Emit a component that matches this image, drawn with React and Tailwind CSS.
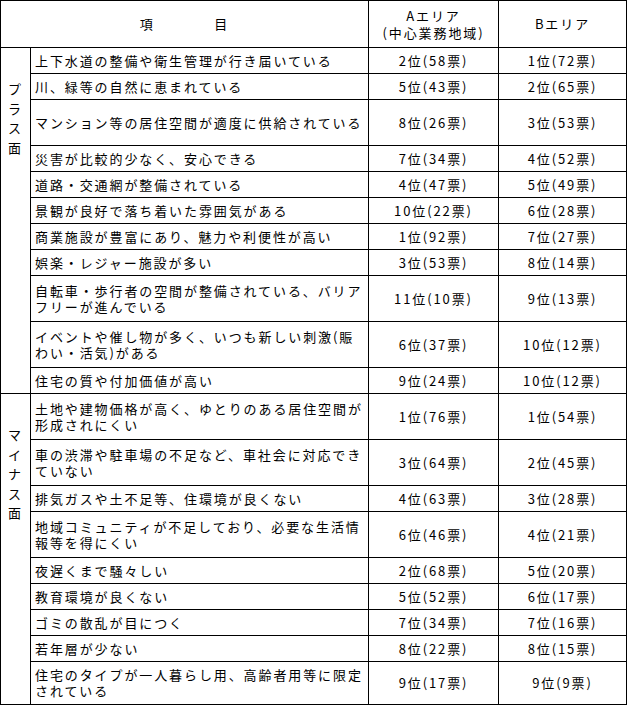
import React from "react";

const plus = [
  ["上下水道の整備や衛生管理が行き届いている", "2位(58票)", "1位(72票)"],
  ["川、緑等の自然に恵まれている", "5位(43票)", "2位(65票)"],
  ["マンション等の居住空間が適度に供給されている", "8位(26票)", "3位(53票)", "h-[46px]"],
  ["災害が比較的少なく、安心できる", "7位(34票)", "4位(52票)"],
  ["道路・交通網が整備されている", "4位(47票)", "5位(49票)"],
  ["景観が良好で落ち着いた雰囲気がある", "10位(22票)", "6位(28票)"],
  ["商業施設が豊富にあり、魅力や利便性が高い", "1位(92票)", "7位(27票)"],
  ["娯楽・レジャー施設が多い", "3位(53票)", "8位(14票)"],
  ["自転車・歩行者の空間が整備されている、バリア\nフリーが進んでいる", "11位(10票)", "9位(13票)", "h-[46px]"],
  ["イベントや催し物が多く、いつも新しい刺激(賑\nわい・活気)がある", "6位(37票)", "10位(12票)", "h-[46px]"],
  ["住宅の質や付加価値が高い", "9位(24票)", "10位(12票)"],
];

const minus = [
  ["土地や建物価格が高く、ゆとりのある居住空間が\n形成されにくい", "1位(76票)", "1位(54票)", "h-[46px]"],
  ["車の渋滞や駐車場の不足など、車社会に対応でき\nていない", "3位(64票)", "2位(45票)", "h-[46px]"],
  ["排気ガスや土不足等、住環境が良くない", "4位(63票)", "3位(28票)"],
  ["地域コミュニティが不足しており、必要な生活情\n報等を得にくい", "6位(46票)", "4位(21票)", "h-[46px]"],
  ["夜遅くまで騒々しい", "2位(68票)", "5位(20票)"],
  ["教育環境が良くない", "5位(52票)", "6位(17票)"],
  ["ゴミの散乱が目につく", "7位(34票)", "7位(16票)"],
  ["若年層が少ない", "8位(22票)", "8位(15票)"],
  ["住宅のタイプが一人暮らし用、高齢者用等に限定\nされている", "9位(17票)", "9位(9票)", "h-[43px]"],
];

function Group({ label, rows }) {
  return rows.map(([item, a, b, h], i) => (
    <tr key={i} className={h || "h-[26px]"}>
      {i === 0 && (
        <td rowSpan={rows.length} className="border border-black align-top p-0">
          <div className="flex flex-col items-center pt-[31px] leading-[19.5px]">
            {label.split("").map((c, j) => (
              <span key={j}>{c}</span>
            ))}
          </div>
        </td>
      )}
      <td className="border border-black pl-[4px] pr-0 py-0 whitespace-pre leading-[16px]">{item}</td>
      <td className="border border-black text-center p-0">{a}</td>
      <td className="border border-black text-center p-0">{b}</td>
    </tr>
  ));
}

export default function App() {
  return (
    <div className="bg-white w-[629px] h-[708px] overflow-hidden">
      <table
        className="w-[626px] table-fixed border-collapse text-[13px] tracking-[1.9px] text-black"
        style={{ fontFamily: '"Noto Sans CJK JP", "Noto Sans", sans-serif' }}
      >
        <colgroup>
          <col className="w-[30px]" />
          <col className="w-[338px]" />
          <col className="w-[130px]" />
          <col className="w-[128px]" />
        </colgroup>
        <thead>
          <tr className="h-[47px]">
            <th colSpan={2} className="border border-black font-normal text-center whitespace-pre p-0">
              項　　　　目
            </th>
            <th className="border border-black font-normal text-center leading-[17px] p-0">
              Aエリア
              <br />
              (中心業務地域)
            </th>
            <th className="border border-black font-normal text-center p-0">Bエリア</th>
          </tr>
        </thead>
        <tbody>
          <Group label="プラス面" rows={plus} />
          <Group label="マイナス面" rows={minus} />
        </tbody>
      </table>
    </div>
  );
}
